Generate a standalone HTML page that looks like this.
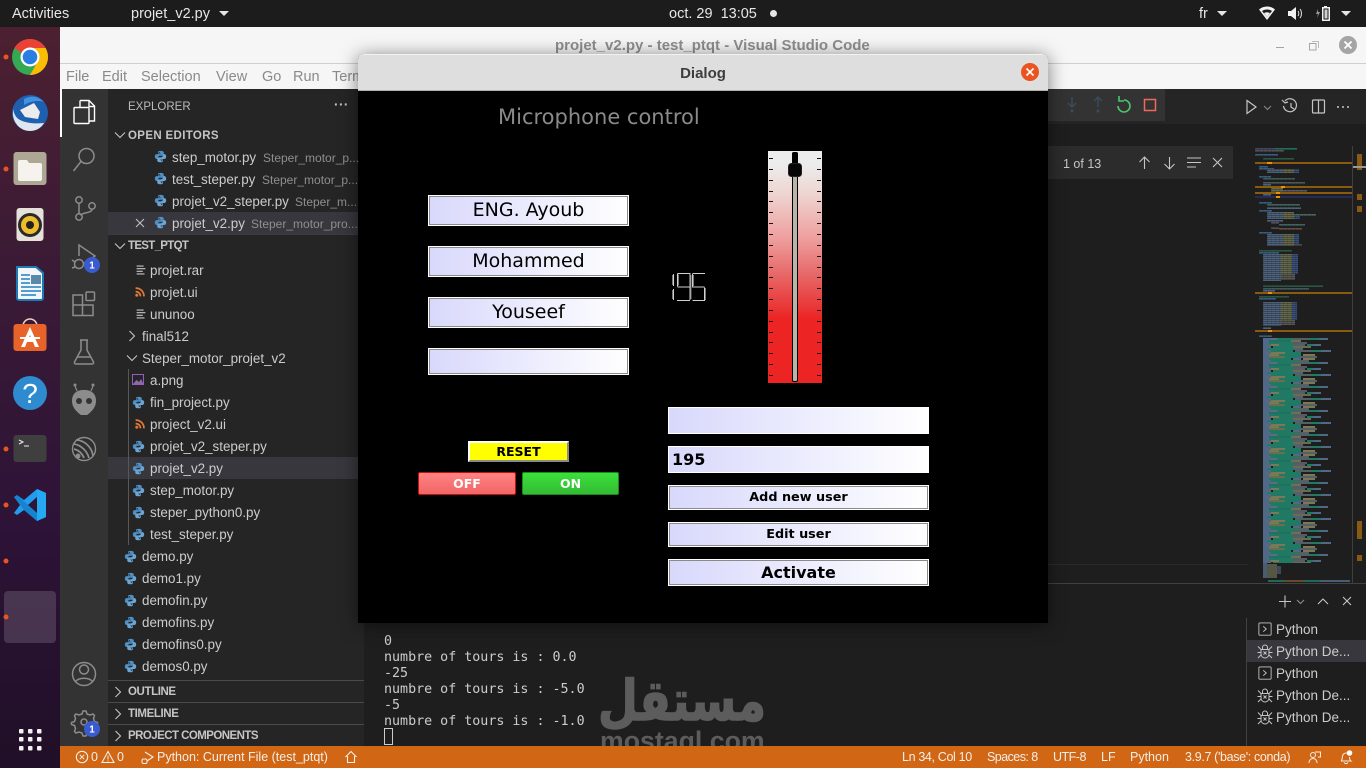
<!DOCTYPE html>
<html><head><meta charset="utf-8"><title>projet_v2.py - test_ptqt</title>
<style>
html,body{margin:0;padding:0;width:1366px;height:768px;overflow:hidden;background:#1e1e1e}
body{position:relative;font-family:"Liberation Sans","DejaVu Sans",sans-serif}
div,svg{position:absolute}
.t{position:absolute;white-space:nowrap;line-height:22px;height:22px;font-size:13.4px;color:#cccccc;margin-top:1px}
.d{color:#8f8f8f;font-size:12px}
.h{font-weight:bold;font-size:11.5px;color:#c5c5c5}
.m{position:absolute;top:66px;line-height:22px;font-size:14.5px;color:#8a8a8a;white-space:nowrap}
.tb{position:absolute;top:3px;line-height:22px;font-size:14.5px;color:#e6e6e6;white-space:nowrap}
.q{position:absolute;font-family:"DejaVu Sans",sans-serif;color:#000;text-align:center;background:linear-gradient(90deg,#d8d8fc,#ffffff);border:1px solid #fff;box-shadow:inset 0 0 0 1px #8a8a8a;box-sizing:border-box;white-space:nowrap}
.e{box-shadow:none}
.s{position:absolute;top:746px;line-height:22px;font-size:12.5px;color:#f4efe9;white-space:nowrap}
.term{position:absolute;left:384px;font:13.33px/16px "DejaVu Sans Mono",monospace;color:#cccccc;white-space:nowrap}
</style></head><body>
<svg width="0" height="0" style="position:absolute"><defs>
<symbol id="py" viewBox="0 0 16 16"><path fill="#4f8fc4" d="M8 1C5 1 5 2 5 3v1.500h3.300V5H3.200C2 5 1 6 1 8s1 3 2.200 3H5V9.500C5 8 6 7 7.500 7h3C11.500 7 12 6.500 12 5.500V3c0-1-1-2-4-2zM6.500 2.300a.7.7 0 110 1.400.7.7 0 010-1.400z"/><path fill="#6aa5d4" d="M8 15c3 0 3-1 3-2v-1.500H7.700V11h5.100C14 11 15 10 15 8s-1-3-2.200-3H11v1.500C11 8 10 9 8.500 9h-3C4.500 9 4 9.500 4 10.500V13c0 1 1 2 4 2zM9.500 13.700a.7.7 0 110-1.400.7.7 0 010 1.400z"/></symbol>
<symbol id="rss" viewBox="0 0 16 16"><g fill="none" stroke="#e37933" stroke-width="2"><path d="M3 3.500c5.500 0 9.500 4 9.500 9.500"/><path d="M3 7.500c3.200 0 5.500 2.300 5.500 5.500"/></g><circle cx="4.300" cy="11.700" r="1.700" fill="#e37933"/></symbol>
<symbol id="lines" viewBox="0 0 16 16"><path stroke="#c5c5c5" stroke-width="1.300" d="M3 3.500h8M3 6.500h10M3 9.500h7M3 12.500h9"/></symbol>
<symbol id="chev" viewBox="0 0 16 16"><path fill="none" stroke="#c5c5c5" stroke-width="1.100" d="M3 5.500l5 5 5-5"/></symbol>
<symbol id="chr" viewBox="0 0 16 16"><path fill="none" stroke="#c5c5c5" stroke-width="1.100" d="M5.500 3l5 5-5 5"/></symbol>
<symbol id="bug" viewBox="0 0 16 16"><g fill="none" stroke="#c5c5c5" stroke-width="1"><path d="M4 6.500h8V11a4 4 0 01-8 0z"/><path d="M5.500 6.500V4.500a2.500 2.500 0 015 0v2"/><path d="M1 3.500l3 3M15 3.500l-3 3M.5 9.500H4M15.500 9.500H12M1 15l3-3M15 15l-3-3M6.500 8.500l3 3M9.500 8.500l-3 3"/></g></symbol>
<symbol id="tp" viewBox="0 0 16 16"><g fill="none" stroke="#c5c5c5" stroke-width="1"><rect x="1" y="1" width="14" height="14" rx="1"/><path d="M6 5l3.500 3L6 11"/></g></symbol>
<pattern id="stripe" width="4" height="2" patternUnits="userSpaceOnUse" y="146"><rect width="4" height="1" y="1" fill="#1e1e1e" opacity=".4"/><rect width="1" height="2" x="3" fill="#1e1e1e" opacity=".15"/></pattern>
<pattern id="dense" width="78" height="24" patternUnits="userSpaceOnUse" x="1263" y="338">
<rect x="0" y="0" width="78" height="24" fill="#1e1e1e"/>
<g opacity=".85">
<rect x="0" y="0" width="8" height="24" fill="#5a7799"/>
<rect x="8" y="0" width="10" height="5" fill="#667d98"/>
<rect x="14" y="0" width="16" height="2" fill="#1f8a70"/><rect x="30" y="0" width="16" height="2" fill="#616b73"/><rect x="46" y="0" width="10" height="2" fill="#1f8a70"/><rect x="56" y="0" width="9" height="2" fill="#5a7799"/>
<rect x="6" y="2" width="22" height="2" fill="#21806e"/><rect x="28" y="2" width="10" height="2" fill="#7a8058"/>
<rect x="6" y="4" width="24" height="2" fill="#1f8a70"/><rect x="30" y="4" width="14" height="2" fill="#5e6870"/>
<rect x="8" y="6" width="8" height="2" fill="#8c8a5f"/><rect x="16" y="6" width="14" height="2" fill="#1f8a70"/><rect x="30" y="6" width="12" height="2" fill="#606a74"/><rect x="44" y="6" width="6" height="2" fill="#1f8a70"/><rect x="50" y="6" width="8" height="2" fill="#5a7799"/>
<rect x="10" y="8" width="20" height="2" fill="#1f8a70"/><rect x="30" y="8" width="18" height="2" fill="#777a5c"/>
<rect x="4" y="10" width="28" height="2" fill="#238a74"/><rect x="32" y="10" width="8" height="2" fill="#58707f"/>
<rect x="8" y="12" width="22" height="2" fill="#1f8a70"/><rect x="32" y="12" width="16" height="2" fill="#606a74"/><rect x="48" y="12" width="10" height="2" fill="#1f8a70"/><rect x="58" y="12" width="10" height="2" fill="#5a7799"/>
<rect x="8" y="14" width="14" height="2" fill="#8c8a5f"/><rect x="22" y="14" width="16" height="2" fill="#1f8a70"/>
<rect x="6" y="16" width="10" height="2" fill="#8c8a5f"/><rect x="16" y="16" width="22" height="2" fill="#1f8a70"/><rect x="40" y="16" width="12" height="2" fill="#8c8a5f"/>
<rect x="6" y="18" width="16" height="2" fill="#7b7c58"/><rect x="22" y="18" width="14" height="2" fill="#1f8a70"/><rect x="36" y="18" width="18" height="2" fill="#606a74"/>
<rect x="6" y="20" width="22" height="2" fill="#1f8a70"/><rect x="30" y="20" width="8" height="2" fill="#5a7799"/><rect x="40" y="20" width="12" height="2" fill="#8c8a5f"/>
<rect x="8" y="22" width="28" height="2" fill="#1f8a70"/><rect x="36" y="22" width="10" height="2" fill="#606a74"/>
</g></pattern>
</defs></svg>

<!-- top bar -->
<div style="left:0;top:0;width:1366px;height:27px;background:#1c1c1c"></div>
<div class="tb" style="left:12px">Activities</div>
<div class="tb" style="left:131px">projet_v2.py</div>
<svg style="left:219px;top:11px" width="10" height="6"><path d="M0 0h10L5 5z" fill="#e6e6e6"/></svg>
<div class="tb" style="left:669px">oct. 29&nbsp; 13:05</div>
<div style="left:770px;top:10px;width:7px;height:7px;border-radius:50%;background:#e6e6e6"></div>
<div class="tb" style="left:1199px">fr</div>
<svg style="left:1217px;top:11px" width="10" height="6"><path d="M0 0h10L5 5z" fill="#e6e6e6"/></svg>
<svg style="left:1258px;top:6px" width="18" height="15"><path d="M1 3.500C5.500-.5 12.500-.5 17 3.500L9 14z" fill="#f2f2f2"/><path d="M4 5c3-2 7-2 10 0L9 11z" fill="#1c1c1c"/><path d="M6 7c2-1 4-1 6 0L9 11z" fill="#f2f2f2"/></svg>
<svg style="left:1287px;top:6px" width="17" height="15"><path d="M1 5h3l5-4v13l-5-4H1z" fill="#f2f2f2"/><path d="M11 5c1 1.500 1 3.500 0 5M13 3c2 2.500 2 6.500 0 9" stroke="#ddd" fill="none"/></svg>
<svg style="left:1315px;top:5px" width="19" height="17"><path d="M3 4L1 9h2l-1 4 3-6H3z" fill="#999"/><path d="M9 2V1h3v1h3v14H7V2z" fill="#f2f2f2"/><rect x="8.500" y="3.500" width="5" height="11" fill="#1c1c1c"/><rect x="9.500" y="4.500" width="3" height="9" fill="#cfcfcf"/></svg>
<svg style="left:1341px;top:11px" width="10" height="6"><path d="M0 0h10L5 5z" fill="#e6e6e6"/></svg>

<!-- dock -->
<div style="left:0;top:27px;width:60px;height:741px;background:linear-gradient(180deg,#4c2030 0,#3a1a36 250px,#2d1337 500px,#200f27 741px)"></div>
<svg style="left:0;top:27px" width="60" height="741">
<g fill="#e95420"><circle cx="6" cy="30" r="2.500"/><circle cx="6" cy="142" r="2.500"/><circle cx="6" cy="422" r="2.500"/><circle cx="6" cy="478" r="2.500"/><circle cx="6" cy="534" r="2.500"/></g>
<!-- chrome -->
<circle cx="30" cy="30" r="18" fill="#34a853"/>
<path d="M30 12a18 18 0 0115.600 9H30a9 9 0 00-8 5L14.400 21A18 18 0 0130 12z" fill="#ea4335"/>
<path d="M45.600 21A18 18 0 0130 48l7.800-13.500A9 9 0 0030 21z" fill="#fbbc05"/>
<circle cx="30" cy="30" r="9.500" fill="#fff"/><circle cx="30" cy="30" r="7.300" fill="#2a7de1"/>
<!-- thunderbird -->
<circle cx="30" cy="86" r="18" fill="#1f5fb0"/><path d="M13 82c1 5 3 9 7 11 6 3 14 4 24 3-3 5-8 8-14 8-9 0-16-7-17-16z" fill="#dfe6f0"/>
<path d="M20 83l14-7 6 9-2 7-13-2z" fill="#ececec"/><path d="M24 72c7-4 14-3 20 3-6-2-13-1-20 3z" fill="#3f93e0"/>
<!-- files -->
<rect x="13.500" y="125" width="33" height="33" rx="3" fill="#ada793"/><path d="M18 135a2 2 0 012-2h7l2 3h11a2 2 0 012 2v14a2 2 0 01-2 2H20a2 2 0 01-2-2z" fill="#f6f3ee"/>
<!-- rhythmbox -->
<rect x="16.500" y="181" width="27" height="33" rx="3" fill="#e6e2da"/><circle cx="30" cy="198" r="12" fill="#2a2a2a"/><circle cx="30" cy="198" r="9" fill="#eebe2a"/><circle cx="30" cy="198" r="4" fill="#222"/>
<!-- writer -->
<path d="M17 240h19l7 6v25a2 2 0 01-2 2H19a2 2 0 01-2-2z" fill="#f2f6fa" stroke="#1d79b8" stroke-width="2"/><path d="M21 248h9M21 252h9M21 256h9M21 260h20M21 264h20M21 268h15" stroke="#2080c0" stroke-width="1.500"/><rect x="31" y="248" width="10" height="9" fill="#5a88a8"/>
<!-- app -->
<path d="M23 299a7 7 0 0114 0" fill="none" stroke="#f4d2be" stroke-width="1.500"/><rect x="13.500" y="297" width="33" height="27" rx="3" fill="#e7632a"/><path d="M30 300l9 20h-4l-2-5h-6l-2 5h-4zm-1.500 12h3L30 308z" fill="#fff"/><path d="M20 311h20" stroke="#fff" stroke-width="2"/>
<!-- help -->
<circle cx="30" cy="366" r="17" fill="#2e8bd0"/><text x="30" y="376" font-family="Liberation Sans" font-size="28" fill="#fff" text-anchor="middle">?</text>
<!-- terminal -->
<rect x="13.500" y="408" width="33" height="27" rx="3" fill="#3f3f3f"/><path d="M19 413l4 2-4 2M24 419h5" stroke="#eee" fill="none"/>
<!-- vscode -->
<path fill-rule="evenodd" d="M37 462L46 466V490L37 494L24 483L17 488L14 486L20 478L14 470L17 468L24 473zM37 470L28 478L37 486z" fill="#1f9cf0"/><path d="M37 462L46 466V490L37 494z" fill="#24a8f2"/><path d="M14 470l3-2 20 18v8L24 483z" fill="#0f6fb5" opacity=".55"/>
<!-- active -->
<rect x="4" y="564" width="52" height="52" rx="4" fill="#ffffff" opacity=".15"/><circle cx="6" cy="590" r="2.500" fill="#e95420"/>
<g fill="#f3f3f3"><rect x="19" y="702" width="4.500" height="4.500" rx="1"/><rect x="28" y="702" width="4.500" height="4.500" rx="1"/><rect x="37" y="702" width="4.500" height="4.500" rx="1"/><rect x="19" y="710" width="4.500" height="4.500" rx="1"/><rect x="28" y="710" width="4.500" height="4.500" rx="1"/><rect x="37" y="710" width="4.500" height="4.500" rx="1"/><rect x="19" y="719" width="4.500" height="4.500" rx="1"/><rect x="28" y="719" width="4.500" height="4.500" rx="1"/><rect x="37" y="719" width="4.500" height="4.500" rx="1"/></g>
</svg>

<!-- vscode chrome -->
<div style="left:60px;top:27px;width:1306px;height:36px;background:#f6f6f6"></div>
<div style="left:60px;top:63px;width:1306px;height:1px;background:#cfcfcd"></div>
<div style="left:60px;top:64px;width:1306px;height:25px;background:#f6f6f6"></div>
<div style="left:555px;top:35px;line-height:22px;font-size:15px;font-weight:bold;color:#8f8f8f;white-space:nowrap">projet_v2.py - test_ptqt - Visual Studio Code</div>
<div style="left:1276px;top:47px;width:8px;height:1px;background:#a5a5a5"></div>
<svg style="left:1309px;top:41px" width="10" height="10"><rect x=".5" y="2.500" width="6.500" height="6.500" fill="none" stroke="#a5a5a5"/><path d="M3 .5h6.500V7" fill="none" stroke="#bdbdbd"/></svg>
<svg style="left:1339px;top:36px" width="18" height="18"><circle cx="9" cy="9" r="9" fill="#a5a5a5"/><path d="M5.500 5.500l7 7M12.500 5.500l-7 7" stroke="#fff" stroke-width="1.800"/></svg>
<div class="m" style="left:66px">File</div><div class="m" style="left:102px">Edit</div><div class="m" style="left:141px">Selection</div><div class="m" style="left:216px">View</div><div class="m" style="left:262px">Go</div><div class="m" style="left:293px">Run</div><div class="m" style="left:332px">Terminal</div>

<!-- activity bar -->
<div style="left:60px;top:89px;width:48px;height:657px;background:#333333"></div>
<div style="left:60px;top:89px;width:2px;height:48px;background:#fff"></div>
<svg style="left:60px;top:89px" width="48" height="657">
<g fill="none" stroke="#ffffff" stroke-width="1.400"><path d="M20 11.500h9l5.500 5.500v15H29"/><path d="M29 11.500v6h5.500"/><path d="M20 11.500v7"/><rect x="14" y="18.500" width="15" height="16" rx="1"/></g>
<g fill="none" stroke="#8c8c8c" stroke-width="1.500">
<circle cx="26.500" cy="67" r="7.500"/><path d="M21 72.500L13.500 82"/>
<circle cx="19" cy="111" r="3.200"/><circle cx="19" cy="128" r="3.200"/><circle cx="32" cy="117" r="3.200"/><path d="M19 114v11M32 120c0 4-7 3-12 6"/>
<path d="M19 167v-11l16 11-12 8"/><circle cx="19" cy="175" r="4.500"/><path d="M12 171l3 2M12 179l3-1"/>
<path d="M13 216h9.500v-10H13zM13 226.500h9.500V216H13zM22.500 226.500H33V216H22.500z"/><rect x="26" y="203" width="8.500" height="8.500" rx="1"/>
<path d="M20 251h8M21 251v10l-6.500 12a1.500 1.500 0 001.500 2h16a1.500 1.500 0 001.500-2L27 261v-10M17 268h14"/>
<circle cx="24" cy="585" r="11.500"/><circle cx="24" cy="580.500" r="4.500"/><path d="M15.500 593c2-5 15-5 17 0"/>
<circle cx="24" cy="633" r="3"/><path d="M24 622l2 0 1 3 3 1 3-1 1.500 1.500-1 3 1 3 3 1v2l-3 1-1 3 1 3-1.500 1.500-3-1-3 1-1 3h-3l-1-3-3-1-3 1-1.500-1.500 1-3-1-3-3-1v-2l3-1 1-3-1-3 1.500-1.500 3 1 3-1 1-3z"/>
</g>
<path d="M24 301c-8 0-12 4-12 11 0 7 6 12 9 14h6c3-2 9-7 9-14 0-7-4-11-12-11z" fill="#8c8c8c"/><circle cx="19" cy="312" r="3" fill="#333"/><circle cx="29" cy="312" r="3" fill="#333"/><path d="M17 302l-2-5M31 302l2-5" stroke="#8c8c8c" stroke-width="1.200"/><circle cx="15" cy="296" r="1.500" fill="#8c8c8c"/><circle cx="33" cy="296" r="1.500" fill="#8c8c8c"/>
<circle cx="24" cy="360" r="11.500" fill="#2f2f2f" stroke="#8c8c8c" stroke-width="1.400"/><g fill="none" stroke="#8c8c8c" stroke-width="1.800"><path d="M16 351c8 0 16 7 17 16M14 355c7 1 13 7 15 14M14 360c4 1 8 4 10 9"/></g><circle cx="18" cy="367" r="2.500" fill="#8c8c8c"/>
<circle cx="32" cy="176" r="8" fill="#3a5bd0"/><circle cx="32" cy="640" r="8" fill="#3a5bd0"/>
<g fill="#fff" font-family="Liberation Sans" font-size="10" font-weight="bold" text-anchor="middle"><text x="32" y="179.500">1</text><text x="32" y="643.500">1</text></g>
</svg>

<!-- sidebar -->
<div style="left:108px;top:89px;width:256px;height:657px;background:#252526"></div>
<div style="left:108px;top:212px;width:256px;height:22px;background:#37373d"></div>
<div style="left:108px;top:234px;width:256px;height:1px;background:#3c3c3c"></div>
<div style="left:108px;top:457px;width:256px;height:22px;background:#37373d"></div>
<div style="left:128px;top:369px;width:1px;height:176px;background:#585858"></div>
<div style="left:108px;top:680px;width:256px;height:1px;background:#4a4a4a"></div>
<div style="left:108px;top:702px;width:256px;height:1px;background:#4a4a4a"></div>
<div style="left:108px;top:724px;width:256px;height:1px;background:#4a4a4a"></div>

<div class="t" style="left:128px;top:95px;font-size:11.5px;color:#bbbbbb">EXPLORER</div>
<div class="t" style="left:334px;top:93px;color:#c5c5c5;font-weight:bold;letter-spacing:.5px">···</div>
<svg style="left:112px;top:127px" width="16" height="16"><use href="#chev"/></svg><div class="t h" style="left:128px;top:124px;letter-spacing:.35px">OPEN EDITORS</div>
<svg style="left:154px;top:150px" width="13" height="13"><use href="#py"/></svg><div class="t" style="left:172px;top:146px">step_motor.py</div><div class="t d" style="left:263px;top:146px">Steper_motor_p...</div>
<svg style="left:154px;top:172px" width="13" height="13"><use href="#py"/></svg><div class="t" style="left:172px;top:168px">test_steper.py</div><div class="t d" style="left:262px;top:168px">Steper_motor_p...</div>
<svg style="left:154px;top:194px" width="13" height="13"><use href="#py"/></svg><div class="t" style="left:172px;top:190px">projet_v2_steper.py</div><div class="t d" style="left:295px;top:190px">Steper_m...</div>
<svg style="left:135px;top:218px" width="10" height="10"><path d="M1 1l8 8M9 1l-8 8" stroke="#c5c5c5"/></svg>
<svg style="left:154px;top:216px" width="13" height="13"><use href="#py"/></svg><div class="t" style="left:172px;top:212px">projet_v2.py</div><div class="t d" style="left:251px;top:212px">Steper_motor_pro...</div>
<svg style="left:112px;top:238px" width="16" height="16"><use href="#chev"/></svg><div class="t h" style="left:128px;top:234px;letter-spacing:-.7px">TEST_PTQT</div>

<svg style="left:134px;top:263px" width="14" height="14"><use href="#lines"/></svg><div class="t" style="left:150px;top:259px">projet.rar</div>
<svg style="left:133px;top:285px" width="14" height="14"><use href="#rss"/></svg><div class="t" style="left:150px;top:281px">projet.ui</div>
<svg style="left:134px;top:307px" width="14" height="14"><use href="#lines"/></svg><div class="t" style="left:150px;top:303px">ununoo</div>
<svg style="left:124px;top:328px" width="16" height="16"><use href="#chr"/></svg><div class="t" style="left:142px;top:325px">final512</div>
<svg style="left:124px;top:350px" width="16" height="16"><use href="#chev"/></svg><div class="t" style="left:142px;top:347px">Steper_motor_projet_v2</div>
<svg style="left:132px;top:374px" width="13" height="12"><rect x=".5" y=".5" width="11" height="10" fill="none" stroke="#9a5cc4"/><path d="M1 10l3.500-4 2.500 2 2-3 2.500 5z" fill="#8a6aa8"/></svg><div class="t" style="left:150px;top:369px">a.png</div>
<svg style="left:132px;top:396px" width="13" height="13"><use href="#py"/></svg><div class="t" style="left:150px;top:391px">fin_project.py</div>
<svg style="left:133px;top:417px" width="14" height="14"><use href="#rss"/></svg><div class="t" style="left:150px;top:413px">project_v2.ui</div>
<svg style="left:132px;top:440px" width="13" height="13"><use href="#py"/></svg><div class="t" style="left:150px;top:435px">projet_v2_steper.py</div>
<svg style="left:132px;top:462px" width="13" height="13"><use href="#py"/></svg><div class="t" style="left:150px;top:457px">projet_v2.py</div>
<svg style="left:132px;top:484px" width="13" height="13"><use href="#py"/></svg><div class="t" style="left:150px;top:479px">step_motor.py</div>
<svg style="left:132px;top:506px" width="13" height="13"><use href="#py"/></svg><div class="t" style="left:150px;top:501px">steper_python0.py</div>
<svg style="left:132px;top:528px" width="13" height="13"><use href="#py"/></svg><div class="t" style="left:150px;top:523px">test_steper.py</div>
<svg style="left:124px;top:550px" width="13" height="13"><use href="#py"/></svg><div class="t" style="left:142px;top:545px">demo.py</div>
<svg style="left:124px;top:572px" width="13" height="13"><use href="#py"/></svg><div class="t" style="left:142px;top:567px">demo1.py</div>
<svg style="left:124px;top:594px" width="13" height="13"><use href="#py"/></svg><div class="t" style="left:142px;top:589px">demofin.py</div>
<svg style="left:124px;top:616px" width="13" height="13"><use href="#py"/></svg><div class="t" style="left:142px;top:611px">demofins.py</div>
<svg style="left:124px;top:638px" width="13" height="13"><use href="#py"/></svg><div class="t" style="left:142px;top:633px">demofins0.py</div>
<svg style="left:124px;top:660px" width="13" height="13"><use href="#py"/></svg><div class="t" style="left:142px;top:655px">demos0.py</div>
<svg style="left:110px;top:684px" width="16" height="16"><use href="#chr"/></svg><div class="t h" style="left:128px;top:680px;letter-spacing:-.4px">OUTLINE</div>
<svg style="left:110px;top:706px" width="16" height="16"><use href="#chr"/></svg><div class="t h" style="left:128px;top:702px;letter-spacing:-.4px">TIMELINE</div>
<svg style="left:110px;top:728px" width="16" height="16"><use href="#chr"/></svg><div class="t h" style="left:128px;top:724px;letter-spacing:-.55px">PROJECT COMPONENTS</div>

<!-- editor right -->
<div style="left:1048px;top:89px;width:318px;height:35px;background:#252526"></div>
<div style="left:1048px;top:124px;width:318px;height:460px;background:#1e1e1e"></div>
<div style="left:1048px;top:89px;width:117px;height:32px;background:#333333"></div>
<svg style="left:1048px;top:89px" width="318" height="36">
<g stroke="#3b4a5c" fill="none" stroke-width="1.500"><path d="M24 8v10M20 14l4 4 4-4M50 18V8M46 12l4-4 4 4"/></g><circle cx="24" cy="22" r="1.500" fill="#3b4a5c"/><circle cx="50" cy="22" r="1.500" fill="#3b4a5c"/>
<path d="M76 11a6 6 0 1 1-6 6" fill="none" stroke="#4dc66c" stroke-width="1.600"/><path d="M71 7v5h5" fill="none" stroke="#4dc66c" stroke-width="1.600"/>
<rect x="96.500" y="10.500" width="11" height="11" fill="none" stroke="#f2685e" stroke-width="1.500"/>
<path d="M199 11.500l9 6.500-9 6.500z" fill="none" stroke="#c5c5c5" stroke-width="1.200"/><path d="M216 17l3.500 3.500 3.500-3.500" fill="none" stroke="#8c8c8c"/>
<g fill="none" stroke="#c5c5c5" stroke-width="1.200"><path d="M237 12a6.500 6.500 0 11-1.500 5"/><path d="M234 11l3 3 3-1M243 14v4l3 2"/><rect x="264.500" y="11" width="12" height="13" rx="1"/><path d="M270.500 11v13"/></g>
<g fill="#c5c5c5"><circle cx="290" cy="18" r="1"/><circle cx="295" cy="18" r="1"/><circle cx="300" cy="18" r="1"/></g></svg>
<!-- find -->
<div style="left:1048px;top:146px;width:185px;height:33px;background:#2c2c2d"></div>
<div class="t" style="left:1063px;top:152px;font-size:12.5px;color:#c5c5c5">1 of 13</div>
<svg style="left:1130px;top:150px" width="100" height="26"><g fill="none" stroke="#c5c5c5" stroke-width="1.100"><path d="M14.500 19V7M9.500 12l5-5 5 5M39.500 7v12M34.500 14l5 5 5-5M57 8h14M57 12.500h14M57 17h9M83 8l9 9M92 8l-9 9"/></g></svg>
<!-- minimap -->
<svg style="left:1248px;top:146px" width="118" height="438" viewBox="1248 146 118 438">
<rect x="1248" y="146" width="104" height="438" fill="#1e1e1e"/>
<g opacity=".78">
<rect x="1255" y="148" width="20" height="2" fill="#4a5a7a"/><rect x="1275" y="148" width="22" height="2" fill="#1f8a70"/><rect x="1255" y="150" width="29" height="2" fill="#6b5a6a"/>
<rect x="1255" y="154" width="23" height="2" fill="#3f6fa0"/><rect x="1263" y="158" width="31" height="2" fill="#2d6a50"/>
<rect x="1259" y="166" width="9" height="2" fill="#3f6fa0"/><rect x="1259" y="168" width="15" height="2" fill="#4a6a90"/><rect x="1267" y="169" width="16" height="4" fill="#5a7799"/><rect x="1283" y="169" width="11" height="4" fill="#7a8058"/><rect x="1294" y="169" width="5" height="4" fill="#3f5f9a"/>
<rect x="1259" y="176" width="12" height="2" fill="#3f6fa0"/><rect x="1263" y="178" width="32" height="2" fill="#4a6a60"/><rect x="1263" y="182" width="42" height="2" fill="#5a6a70"/><rect x="1263" y="184" width="8" height="2" fill="#5a7799"/>
<rect x="1271" y="186" width="12" height="7" fill="#7a8058"/><rect x="1283" y="190" width="24" height="2" fill="#6a6a70"/>
<rect x="1263" y="194" width="8" height="2" fill="#5a7799"/>
<rect x="1259" y="202" width="13" height="2" fill="#3f6fa0"/><rect x="1267" y="204" width="33" height="2" fill="#4a7a6a"/><rect x="1267" y="207" width="34" height="2" fill="#5a7799"/>
<rect x="1259" y="210" width="13" height="2" fill="#3f6fa0"/><rect x="1267" y="212" width="16" height="7" fill="#5a7799"/><rect x="1283" y="212" width="11" height="7" fill="#7a8058"/><rect x="1294" y="214" width="22" height="2" fill="#5a7a70"/><rect x="1294" y="216" width="6" height="3" fill="#3f5f9a"/>
<rect x="1267" y="220" width="16" height="2" fill="#5a7799"/><rect x="1271" y="222" width="8" height="2" fill="#6a5a6a"/><rect x="1279" y="224" width="26" height="2" fill="#4a7a7a"/><rect x="1271" y="227" width="8" height="2" fill="#6a5a6a"/><rect x="1279" y="228" width="23" height="2" fill="#7a5a48"/>
<rect x="1259" y="232" width="13" height="2" fill="#3f6fa0"/><rect x="1267" y="234" width="16" height="12" fill="#5a7799"/><rect x="1283" y="234" width="11" height="12" fill="#7a8058"/><rect x="1294" y="234" width="5" height="12" fill="#3f5f9a"/><rect x="1294" y="244" width="8" height="2" fill="#5a5a6a"/>
<rect x="1259" y="250" width="33" height="2" fill="#2d6a50"/><rect x="1259" y="252" width="20" height="2" fill="#3f6fa0"/><rect x="1263" y="254" width="18" height="27" fill="#5a7799"/><rect x="1281" y="254" width="11" height="20" fill="#7a8058"/><rect x="1292" y="254" width="6" height="20" fill="#3f5f9a"/><rect x="1281" y="274" width="14" height="6" fill="#6a6a60"/>
<rect x="1263" y="285" width="60" height="2" fill="#2d6a50"/><rect x="1263" y="288" width="46" height="2" fill="#4a6a70"/><rect x="1263" y="290" width="12" height="2" fill="#5a7799"/>
<rect x="1259" y="296" width="30" height="2" fill="#2d6a50"/><rect x="1259" y="298" width="17" height="2" fill="#3f6fa0"/><rect x="1263" y="302" width="18" height="24" fill="#5a7799"/><rect x="1281" y="302" width="11" height="18" fill="#7a8058"/><rect x="1292" y="302" width="5" height="18" fill="#3f5f9a"/><rect x="1281" y="320" width="14" height="5" fill="#6a6a60"/>
<rect x="1263" y="327" width="8" height="2" fill="#5a7799"/><rect x="1259" y="335" width="13" height="2" fill="#3f6fa0"/>
</g>
<rect x="1248" y="146" width="104" height="192" fill="url(#stripe)"/>
<rect x="1263" y="338" width="78" height="225" fill="url(#dense)"/>
<rect x="1263" y="563" width="4" height="15" fill="#5a7799" opacity=".7"/><rect x="1267" y="564" width="10" height="14" fill="#7a7c5c" opacity=".6"/><rect x="1277" y="566" width="4" height="8" fill="#4a5a70" opacity=".7"/>
<g opacity=".7"><rect x="1268" y="580" width="16" height="2" fill="#1f8a70"/><rect x="1284" y="580" width="20" height="2" fill="#8a5a30"/><rect x="1304" y="580" width="16" height="2" fill="#1f8a70"/><rect x="1320" y="580" width="30" height="2" fill="#5a7799"/></g>
<g fill="#8a5a10"><rect x="1255" y="162" width="97" height="2"/><rect x="1255" y="186" width="97" height="2"/><rect x="1255" y="192" width="97" height="2"/><rect x="1255" y="292" width="97" height="2"/><rect x="1255" y="330" width="97" height="2"/></g>
<rect x="1255" y="196" width="97" height="2" fill="#262a56"/>
<g fill="#f09000"><rect x="1267" y="162" width="5" height="2"/><rect x="1281" y="186" width="4" height="2"/><rect x="1276" y="192" width="4" height="2"/><rect x="1276" y="196" width="4" height="2"/><rect x="1268" y="292" width="4" height="2"/><rect x="1268" y="330" width="4" height="2"/></g>
<rect x="1352" y="146" width="1" height="438" fill="#3f3f42"/>
<g fill="#875a16"><rect x="1357" y="154" width="5" height="16"/><rect x="1357" y="194" width="5" height="6"/><rect x="1357" y="206" width="5" height="6"/><rect x="1357" y="521" width="5" height="18"/><rect x="1357" y="555" width="5" height="6"/></g>
<rect x="1353" y="166" width="13" height="2" fill="#9a9a9a"/>
</svg>

<!-- panel -->
<div style="left:364px;top:583px;width:1002px;height:1px;background:#414141"></div>
<div style="left:364px;top:584px;width:1002px;height:162px;background:#1e1e1e"></div>
<div style="left:364px;top:564px;width:884px;height:1px;background:#2a2a2a"></div>
<div class="term" style="top:634px">0<br>numbre of tours is : 0.0<br>-25<br>numbre of tours is : -5.0<br>-5<br>numbre of tours is : -1.0</div>
<div style="left:384px;top:728px;width:7px;height:15px;border:1px solid #ccc"></div>
<div style="left:1246px;top:618px;width:1px;height:128px;background:#414141"></div>
<div style="left:1247px;top:640px;width:119px;height:22px;background:#37373d"></div>
<svg style="left:1278px;top:594px" width="84" height="16"><g fill="none" stroke="#c5c5c5" stroke-width="1.100"><path d="M1 7.500h12M7 1.500v12"/><path d="M19 6l3.500 3.500L26 6" stroke="#8c8c8c"/><path d="M40 10l5-5 5 5M65 3l8 8M73 3l-8 8"/></g></svg>
<svg style="left:1258px;top:622px" width="14" height="14"><use href="#tp"/></svg><div class="t" style="left:1276px;top:618px;font-size:13.5px">Python</div>
<svg style="left:1257px;top:643px" width="16" height="16"><use href="#bug"/></svg><div class="t" style="left:1276px;top:640px;font-size:13.5px">Python De...</div>
<svg style="left:1258px;top:666px" width="14" height="14"><use href="#tp"/></svg><div class="t" style="left:1276px;top:662px;font-size:13.5px">Python</div>
<svg style="left:1257px;top:687px" width="16" height="16"><use href="#bug"/></svg><div class="t" style="left:1276px;top:684px;font-size:13.5px">Python De...</div>
<svg style="left:1257px;top:709px" width="16" height="16"><use href="#bug"/></svg><div class="t" style="left:1276px;top:706px;font-size:13.5px">Python De...</div>

<!-- dialog -->
<div style="left:358px;top:54px;width:690px;height:569px;background:#000;border-radius:6px 6px 0 0;box-shadow:0 2px 18px rgba(0,0,0,.5)"></div>
<div style="left:358px;top:54px;width:690px;height:37px;background:#dedede;border-radius:6px 6px 0 0;box-sizing:border-box;border-bottom:1px solid #b0b0b0;border-top:1px solid #f2f2f2"></div>
<div style="left:358px;top:63px;width:690px;text-align:center;line-height:22px;font-size:15px;font-weight:bold;color:#3d3d3d">Dialog</div>
<svg style="left:1021px;top:63px" width="18" height="18"><circle cx="9" cy="9" r="9" fill="#e95420"/><path d="M5.500 5.500l7 7M12.500 5.500l-7 7" stroke="#fff" stroke-width="1.700"/></svg>
<div style="left:498px;top:102px;font-family:'DejaVu Sans',sans-serif;font-size:21px;line-height:30px;color:#8a8a8a;white-space:nowrap">Microphone control</div>

<div class="q" style="left:428px;top:195px;width:201px;height:31px;line-height:29px;font-size:19px">ENG. Ayoub</div>
<div class="q" style="left:428px;top:246px;width:201px;height:31px;line-height:29px;font-size:19px">Mohammed</div>
<div class="q" style="left:428px;top:297px;width:201px;height:31px;line-height:29px;font-size:19px">Youseef</div>
<div class="q" style="left:428px;top:348px;width:201px;height:27px"></div>

<div style="left:468px;top:441px;width:101px;height:21px;box-sizing:border-box;background:#ffff00;border:2px solid;border-color:#fff #8a8a8a #8a8a8a #fff;text-align:center;font:bold 12.5px/17px 'DejaVu Sans',sans-serif;color:#000">RESET</div>
<div style="left:418px;top:472px;width:98px;height:23px;box-sizing:border-box;background:linear-gradient(180deg,#ff8383,#f26666);border:1px solid #c31010;border-radius:2px;text-align:center;font:bold 12.5px/21px 'DejaVu Sans',sans-serif;color:#fff">OFF</div>
<div style="left:522px;top:472px;width:97px;height:23px;box-sizing:border-box;background:linear-gradient(180deg,#3be03b,#33bb33);border:1px solid #1b8a1b;border-radius:2px;text-align:center;font:bold 12.5px/21px 'DejaVu Sans',sans-serif;color:#fff">ON</div>

<svg style="left:668px;top:270px" width="42" height="34"><g fill="none" stroke="#d0d0d0" stroke-width="1"><path d="M5.500 4v12M5.500 19v11M9.500 3.500h12.500v13.500h-12.500M9.500 3.500V16.500M22 17v13M9 30.500h13M24.500 3.500h12.500M24.500 4v13h12M36.500 17.500v13M24.500 30.500h12.500"/></g><g fill="none" stroke="#777" stroke-width="1"><path d="M4.500 5v10M4.500 20v9M10.500 4.500v11M23 5v24M25.500 5v11M37.500 18v12"/></g></svg>

<div style="left:768px;top:151px;width:54px;height:232px;background:linear-gradient(180deg,#ececec 0,#ececec 6%,#eed6d2 18%,#ee9d9d 38%,#e76c6c 52%,#e93535 68%,#ec2424 72%,#ec2424 100%)"></div>
<svg style="left:768px;top:151px" width="54" height="232">
<g stroke="#111" stroke-width="1">
<path d="M1 7.500h4M49 7.500h4M1 18.500h4M49 18.500h4M1 29.500h4M49 29.500h4M1 40.500h4M49 40.500h4M1 50.500h4M49 50.500h4M1 61.500h4M49 61.500h4M1 72.500h4M49 72.500h4M1 83.500h4M49 83.500h4M1 94.500h4M49 94.500h4M1 105.500h4M49 105.500h4M1 116.500h4M49 116.500h4M1 126.500h4M49 126.500h4M1 137.500h4M49 137.500h4M1 148.500h4M49 148.500h4M1 159.500h4M49 159.500h4M1 170.500h4M49 170.500h4M1 181.500h4M49 181.500h4M1 191.500h4M49 191.500h4M1 202.500h4M49 202.500h4M1 213.500h4M49 213.500h4M1 224.500h4M49 224.500h4"/></g>
<rect x="24.500" y="1.500" width="5" height="229" rx="1.500" fill="#b8b4a8" stroke="#000"/>
<rect x="24" y="1" width="6" height="20" rx="2" fill="#000"/>
<rect x="20.500" y="12.500" width="13" height="13" rx="3" fill="#060606" stroke="#222"/>
</svg>

<div class="q e" style="left:668px;top:407px;width:261px;height:27px"></div>
<div class="q e" style="left:668px;top:446px;width:261px;height:27px;text-align:left;padding-left:3px;font-weight:bold;font-size:16px;line-height:26px">195</div>
<div class="q" style="left:668px;top:485px;width:261px;height:25px;font-weight:bold;font-size:12.8px;line-height:23px">Add new user</div>
<div class="q" style="left:668px;top:522px;width:261px;height:25px;font-weight:bold;font-size:12.8px;line-height:23px">Edit user</div>
<div class="q" style="left:668px;top:559px;width:261px;height:27px;font-weight:bold;font-size:16px;line-height:25px">Activate</div>

<!-- watermark -->
<div style="left:500px;top:662px;width:266px;height:80px;line-height:80px;font-family:'DejaVu Sans',sans-serif;font-weight:bold;font-size:56px;color:#5c5c5c;-webkit-text-stroke:1.5px #5c5c5c;white-space:nowrap;text-align:right;transform:scaleX(.82);transform-origin:right center" dir="ltr"><span dir="rtl">مستقل</span></div>
<div style="left:600px;top:726px;font-family:'Liberation Sans',sans-serif;font-weight:bold;font-size:26.7px;line-height:30px;color:#5c5c5c;white-space:nowrap">mostaql.com</div>

<!-- status bar -->
<div style="left:60px;top:746px;width:1306px;height:22px;background:#d16614"></div>
<svg style="left:75px;top:750px" width="14" height="14"><circle cx="7" cy="7" r="5.700" fill="none" stroke="#f4efe9" stroke-width="1.100"/><path d="M4.800 4.800l4.400 4.400M9.200 4.800L4.800 9.200" stroke="#f4efe9"/></svg>
<div class="s" style="left:91px">0</div>
<svg style="left:101px;top:750px" width="14" height="14"><path d="M7 1.500L13 12.500H1z" fill="none" stroke="#f4efe9" stroke-width="1.100"/><path d="M7 5.500v4M7 10.500v1" stroke="#f4efe9"/></svg>
<div class="s" style="left:117px">0</div>
<svg style="left:140px;top:750px" width="15" height="15"><path d="M5 2l8 5-6 4" fill="none" stroke="#f4efe9" stroke-width="1.100"/><rect x="2" y="9" width="5" height="4.500" rx="1.500" fill="none" stroke="#f4efe9"/></svg>
<div class="s" style="left:157px">Python: Current File (test_ptqt)</div>
<svg style="left:344px;top:750px" width="14" height="14"><path d="M1.500 7L7 1.500 12.500 7M3.500 6v6.500h7V6" fill="none" stroke="#f4efe9" stroke-width="1.100"/></svg>
<div class="s" style="left:902px;letter-spacing:-.35px">Ln 34, Col 10</div>
<div class="s" style="left:987px;letter-spacing:-.55px">Spaces: 8</div>
<div class="s" style="left:1053px;letter-spacing:-.5px">UTF-8</div>
<div class="s" style="left:1101px">LF</div>
<div class="s" style="left:1130px">Python</div>
<div class="s" style="left:1185px;letter-spacing:-.35px">3.9.7 ('base': conda)</div>
<svg style="left:1307px;top:750px" width="15" height="15"><g fill="none" stroke="#f4efe9"><circle cx="6" cy="5" r="2.500"/><path d="M2 13c0-6 8-6 8 0M8 2h5.500v5H11"/></g></svg>
<svg style="left:1338px;top:749px" width="16" height="16"><path d="M3 12c1.500-1 1-3 1.500-5 .5-2 2-3 4-3M3 12h10c-1.500-1-1.500-3-1.500-4M6 13.500c1 1.500 3 1.500 4 0" fill="none" stroke="#f4efe9"/><circle cx="11.500" cy="4" r="2.800" fill="#fff"/></svg>
</body></html>
